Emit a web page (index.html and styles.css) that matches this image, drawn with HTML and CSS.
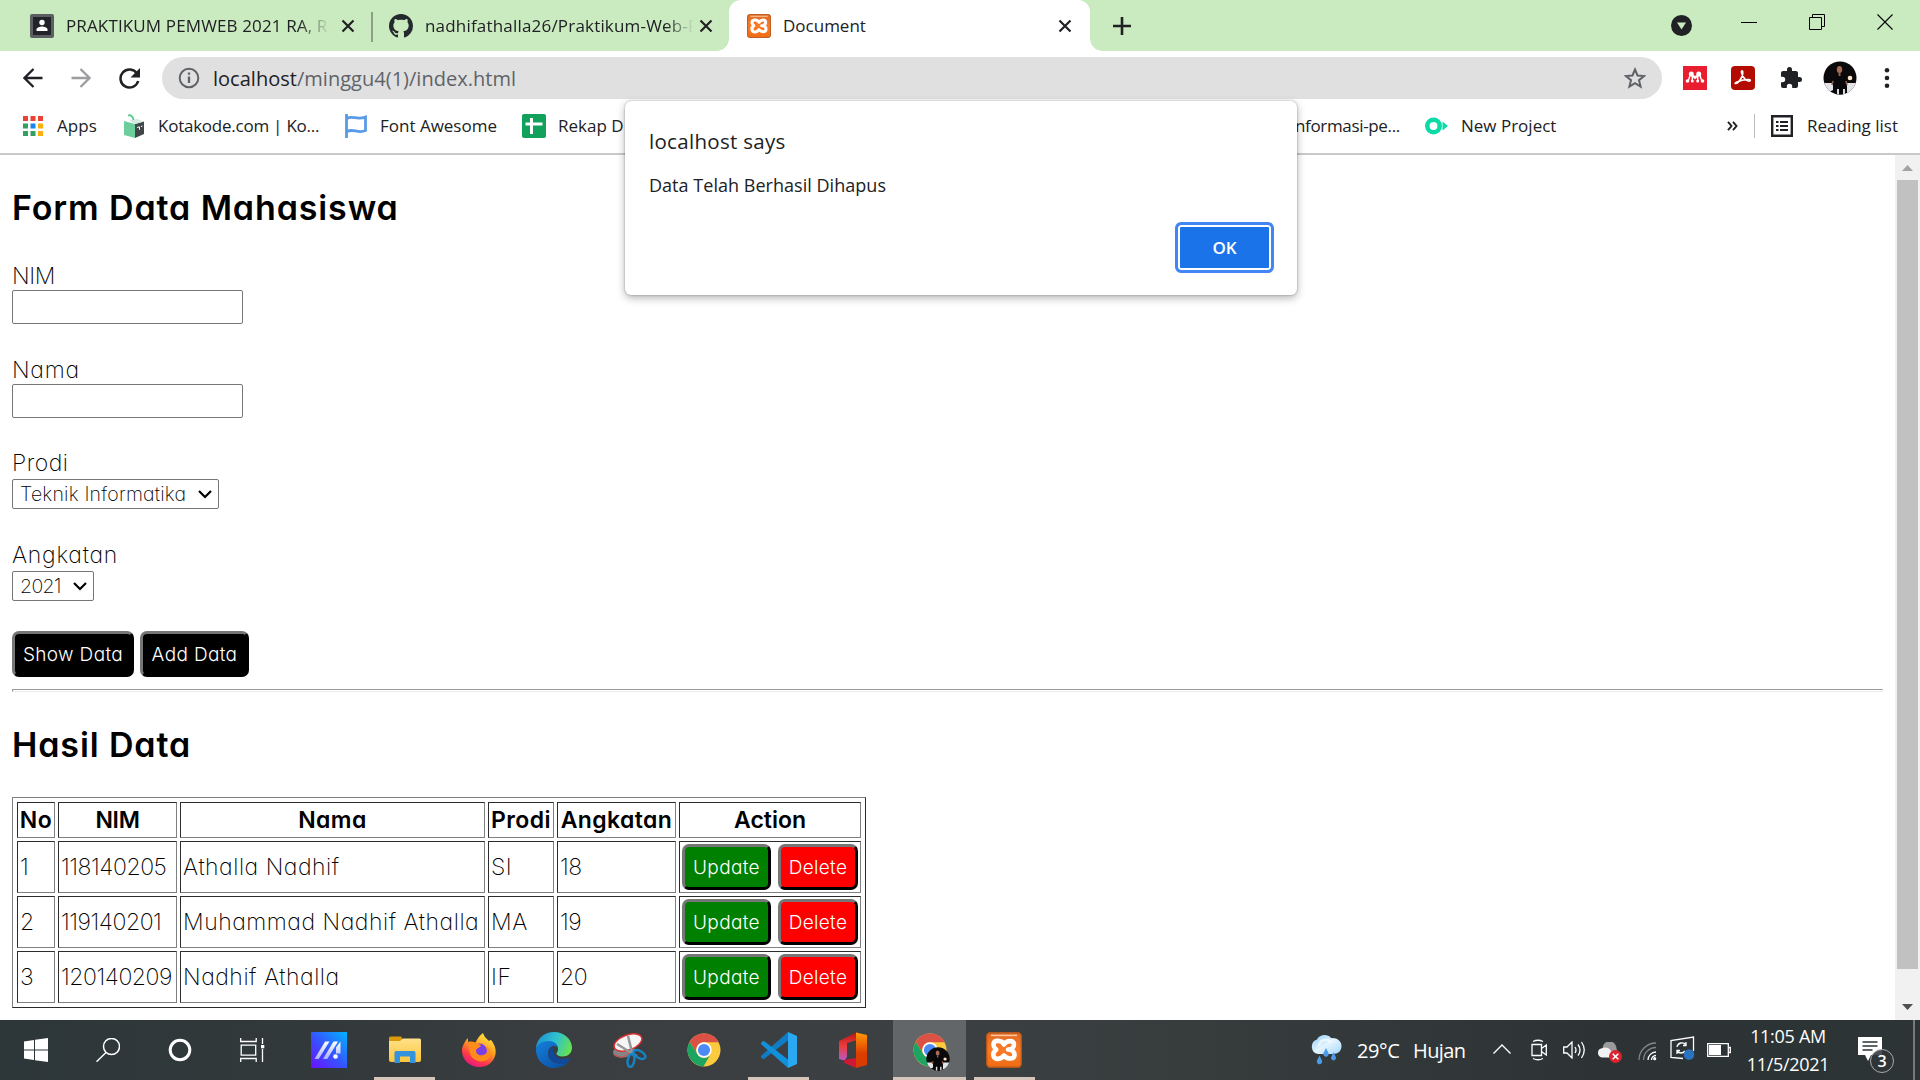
FILE: index.html
```html
<!DOCTYPE html>
<html lang="id">
<head>
<meta charset="utf-8">
<title>Document</title>
<link rel="stylesheet" href="styles.css">
</head>
<body>
<svg class="defs" width="0" height="0">
  <defs>
    <linearGradient id="ma" x1="0" y1="1" x2="1" y2="0"><stop offset="0" stop-color="#6a10ff"/><stop offset=".5" stop-color="#3457ff"/><stop offset="1" stop-color="#00b4ff"/></linearGradient>
    <linearGradient id="stripe" x1="0" y1="1" x2="0" y2="0"><stop offset="0" stop-color="#a9b4ff"/><stop offset="1" stop-color="#fff"/></linearGradient>
    <linearGradient id="folder" x1="0" y1="0" x2="0" y2="1"><stop offset="0" stop-color="#ffe08a"/><stop offset="1" stop-color="#fcc63a"/></linearGradient>
    <linearGradient id="fox" x1=".8" y1="0" x2=".3" y2="1"><stop offset="0" stop-color="#fff04a"/><stop offset=".45" stop-color="#ff9a1e"/><stop offset=".75" stop-color="#ff3b47"/><stop offset="1" stop-color="#e31587"/></linearGradient>
    <linearGradient id="edgeTop" x1="0" y1=".3" x2="1" y2=".6"><stop offset="0" stop-color="#1c92d2"/><stop offset=".5" stop-color="#2fc1cf"/><stop offset="1" stop-color="#66e24f"/></linearGradient>
    <linearGradient id="edgeLow" x1="0" y1="0" x2="1" y2="1"><stop offset="0" stop-color="#1480dd"/><stop offset="1" stop-color="#0a4a9c"/></linearGradient>
    <linearGradient id="offL" x1="0" y1="0" x2="0" y2="1"><stop offset="0" stop-color="#b41818"/><stop offset=".5" stop-color="#ee3a3c"/><stop offset="1" stop-color="#b45ac8"/></linearGradient>
    <linearGradient id="offR" x1="0" y1="0" x2="0" y2="1"><stop offset="0" stop-color="#ff9a0a"/><stop offset=".6" stop-color="#dd3d00"/><stop offset="1" stop-color="#d83a00"/></linearGradient>
    <linearGradient id="cloud" x1="0" y1="0" x2="1" y2="1"><stop offset="0" stop-color="#8ccdf8"/><stop offset=".5" stop-color="#e3f4ff"/><stop offset="1" stop-color="#a6d8fa"/></linearGradient>
    <linearGradient id="xa" x1="0" y1="0" x2="0" y2="1"><stop offset="0" stop-color="#dd6a25"/><stop offset=".5" stop-color="#fb7a24"/><stop offset="1" stop-color="#ef6c14"/></linearGradient>
    <clipPath id="round"><circle cx="17" cy="17" r="16.5"/></clipPath>
    <symbol id="x" viewBox="0 0 14 14"><path d="M1.5 1.5l11 11m0-11l-11 11" stroke="#202124" stroke-width="2.2"/></symbol>
    <symbol id="xampp" viewBox="0 0 36 36"><rect x=".7" y=".7" width="34.6" height="34.6" rx="3.5" fill="url(#xa)" stroke="#b5561c" stroke-width="1.4"/><path d="M5 3.400h26" stroke="#ffc49a" stroke-width="1.600"/><path d="M18 12.500C16 8 8 7.500 7.500 12.300c-.2 2.700 1.500 3.700 2.700 5.400C8.200 19.200 6.800 21 7.500 24c1.500 4.300 7.500 3.500 10.500-.5 3 4 10 4 10.500 0 .4-3.800-2.500-5.800-6.500-6 3.500 0 6.200-1.700 6-5C27.700 8 21 8 18 12.500z" fill="none" stroke="#fff" stroke-width="4.600" stroke-linejoin="round"/></symbol>
    <symbol id="photo" viewBox="0 0 34 34"><g clip-path="url(#round)"><rect width="34" height="34" fill="#0b0909"/><path d="M0 22h10v7l-6 3H0zM24 22h10v7l-7 3h-3z" fill="#e3e4ea"/><path d="M11 14q6-4 11 0l2 8-2 12H12l-2-12z" fill="#08080b"/><ellipse cx="16.500" cy="8.500" rx="2.700" ry="3.600" fill="#a76d57"/><path d="M15.500 12h2v3h-2z" fill="#996052"/><circle cx="27" cy="17" r="2.300" fill="#ffe7cb"/><path d="M14 28h2v6h-2zM20 28h2v6h-2z" fill="#ddd"/><path d="M10 20l-1 4m14-4l1 4" stroke="#8a5c4d" stroke-width="1.600"/></g></symbol>
    <symbol id="chrome" viewBox="0 0 34 34"><circle cx="17" cy="17" r="16.500" fill="#fccb3d"/><path d="M2.700 8.800A16.500 16.500 0 0 1 31.600 9.300H17A7.700 7.700 0 0 0 10.300 20.900z" fill="#dc5146"/><path d="M2.700 8.800L10.300 20.900A7.700 7.700 0 0 0 23.700 20.900L16.500 33.500A16.500 16.500 0 0 1 2.700 8.800z" fill="#1da362"/><circle cx="17" cy="17" r="7.700" fill="#fff"/><circle cx="17" cy="17" r="6.100" fill="#4c8bf5"/></symbol>
  </defs>
</svg>

<div class="screen">
  <header class="tabs">
    <div class="tab tab-one">
      <svg width="24" height="24" viewBox="0 0 24 24"><rect width="24" height="24" rx="2" fill="#5b5e63"/><rect x="3" y="3" width="18" height="18" fill="#202327"/><circle cx="12" cy="8.500" r="2.700" fill="#fff"/><path d="M6.500 17v-1.500c0-2 3.500-3 5.500-3s5.500 1 5.500 3V17z" fill="#fff"/></svg>
      <span class="tab-title title-one">PRAKTIKUM PEMWEB 2021 RA, R</span>
      <svg class="close" width="14" height="14"><use href="#x"/></svg>
    </div>
    <div class="tab tab-two">
      <svg width="24" height="24" viewBox="0 0 16 16"><path fill="#24292e" d="M8 0C3.580 0 0 3.580 0 8c0 3.540 2.290 6.530 5.470 7.590.4.070.55-.17.55-.38 0-.19-.01-.82-.01-1.490-2.010.37-2.530-.49-2.690-.94-.09-.23-.48-.94-.82-1.130-.28-.15-.68-.52-.01-.53.63-.01 1.080.58 1.230.82.72 1.210 1.870.87 2.330.66.070-.52.28-.87.51-1.070-1.780-.2-3.640-.89-3.640-3.950 0-.87.31-1.590.82-2.150-.08-.2-.36-1.020.08-2.120 0 0 .67-.21 2.200.82.64-.18 1.320-.27 2-.27s1.360.09 2 .27c1.530-1.040 2.200-.82 2.200-.82.44 1.100.16 1.920.08 2.120.51.56.82 1.270.82 2.150 0 3.070-1.870 3.750-3.650 3.950.29.25.54.73.54 1.480 0 1.070-.01 1.930-.01 2.200 0 .21.15.46.55.38A8.010 8.010 0 0 0 16 8c0-4.420-3.580-8-8-8z"/></svg>
      <span class="tab-title title-two">nadhifathalla26/Praktikum-Web-P</span>
      <svg class="close" width="14" height="14"><use href="#x"/></svg>
    </div>
    <div class="tab tab-active">
      <svg width="24" height="24"><use href="#xampp"/></svg>
      <span class="tab-title">Document</span>
      <svg class="close" width="14" height="14"><use href="#x"/></svg>
    </div>
    <svg class="plus" width="18" height="18" viewBox="0 0 18 18"><path d="M9 0v18M0 9h18" stroke="#202124" stroke-width="2.600"/></svg>
    <div class="window-tools">
      <svg width="21" height="21" viewBox="0 0 21 21"><circle cx="10.500" cy="10.500" r="10.500" fill="#202124"/><path d="M6 7.500h9l-4.500 7z" fill="#caeac0"/></svg>
      <svg class="win" width="16" height="16"><path d="M0 8.500h16" stroke="#000"/></svg>
      <svg class="win" width="16" height="16" fill="none" stroke="#000"><path d="M.5 3.500h12v12H.5zM3.500 3V.5h12v12H13"/></svg>
      <svg class="win" width="16" height="16" stroke="#000" stroke-width="1.100"><path d="M.5.500l15 15m0-15l-15 15"/></svg>
    </div>
  </header>

  <div class="toolbar">
    <svg width="20" height="20" viewBox="0 0 20 20" fill="none" stroke="#202124" stroke-width="2.300"><path d="M19.500 10H2M10.500 1L1.500 10l9 9"/></svg>
    <svg class="forward" width="20" height="20" viewBox="0 0 20 20" fill="none" stroke="#9b9da0" stroke-width="2.300"><path d="M.5 10H18M9.500 1l9 9-9 9"/></svg>
    <svg class="reload" width="21" height="21" viewBox="0 0 21 21"><path d="M18 5.500A9 9 0 1 0 19.200 13" fill="none" stroke="#202124" stroke-width="2.500"/><path d="M21 0v9.500h-9.500z" fill="#202124"/></svg>
    <div class="omnibox">
      <svg width="22" height="22" viewBox="0 0 22 22"><circle cx="11" cy="11" r="9.300" fill="none" stroke="#5f6368" stroke-width="2"/><path d="M11 9.500v6.500M11 5.500v2.300" stroke="#5f6368" stroke-width="2.300"/></svg>
      <span class="url"><b>localhost</b>/minggu4(1)/index.html</span>
      <svg class="star" width="22" height="22" viewBox="0 0 22 22"><path d="M11 2.500l2.500 6 6.500.5-5 4.200 1.600 6.400L11 16.200l-5.600 3.400L7 13.200 2 9l6.500-.5z" fill="none" stroke="#5f6368" stroke-width="2"/></svg>
    </div>
    <svg class="ext-one" width="24" height="24" viewBox="0 0 24 24"><path fill="#ea1d2f" d="M0 0h24v24H0z"/><path d="M4.500 15c2-1 1.500-5 3.500-7M8 8l4 3.500L16 8M9.300 9v6M14.700 9v6M16 8c2 2 1.500 6 3.500 7" fill="none" stroke="#fff" stroke-width="1.400"/><g fill="#fff"><circle cx="8.300" cy="8" r="2.500"/><circle cx="15.700" cy="8" r="2.500"/><circle cx="12" cy="11.300" r="1.700"/><circle cx="4.500" cy="15" r="1.800"/><circle cx="9.300" cy="15" r="1.500"/><circle cx="14.700" cy="15" r="1.500"/><circle cx="19.500" cy="15" r="1.800"/></g></svg>
    <svg class="ext" width="24" height="24" viewBox="0 0 24 24"><rect width="24" height="24" rx="4" fill="#b30b00"/><path d="M4.500 17.500C8 17 12.500 10 11.700 5.500 11.400 4.200 10 4.700 10.500 6.500c1 4.500 4.500 8.500 7.500 8.700 1.800 0 1.700-1.600 0-1.700-4-.3-8.500.8-12.500 2.700-1.500.8-1.800 1.500-1 1.300z" fill="none" stroke="#fff" stroke-width="1.600"/></svg>
    <svg class="puzzle" width="24" height="24" viewBox="0 0 24 24"><path fill="#202124" d="M20.500 11H19V7c0-1.100-.9-2-2-2h-4V3.500a2.500 2.500 0 0 0-5 0V5H4c-1.100 0-2 .9-2 2v3.800h1.500a2.700 2.700 0 0 1 0 5.400H2V20c0 1.100.9 2 2 2h3.800v-1.500a2.700 2.700 0 0 1 5.400 0V22H17c1.100 0 2-.9 2-2v-4h1.500a2.500 2.500 0 0 0 0-5z"/></svg>
    <svg class="avatar" width="34" height="34"><use href="#photo"/></svg>
    <svg class="dots" width="6" height="22" fill="#202124"><circle cx="3" cy="3.300" r="2.300"/><circle cx="3" cy="11" r="2.300"/><circle cx="3" cy="18.700" r="2.300"/></svg>
  </div>

  <div class="bookmarks">
    <div class="mark apps">
      <svg width="20" height="20" viewBox="0 0 20 20"><path fill="#ea4335" d="M0 0h5v5H0zM7.500 0h5v5h-5zM15 0h5v5h-5z"/><path fill="#34a060" d="M0 7.500h5v5H0zM0 15h5v5H0zM7.500 15h5v5h-5z"/><path fill="#1a85f0" d="M7.500 7.500h5v5h-5z"/><path fill="#fbaf0a" d="M15 7.500h5v5h-5zM15 15h5v5h-5z"/></svg>
      <span>Apps</span>
    </div>
    <div class="mark kota">
      <svg width="21" height="24" viewBox="0 0 21 24"><path fill="#6ccf9b" d="M0 7l11 3v14L0 21z"/><path fill="#41464a" d="M11 10l9-2.500V20l-9 4z"/><path d="M5 6.500L13 5l7 2.500-9 2.500z" fill="#d6eadf"/><path d="M13 13.500l2.500-.7v3M17 12.500l1.500-.5" stroke="#fff" fill="none"/><path d="M4 1.500c3-1 5 1 5.500 4.500" stroke="#55c98c" stroke-width="1.800" fill="none"/></svg>
      <span>Kotakode.com | Ko...</span>
    </div>
    <div class="mark fa">
      <svg width="22" height="24" viewBox="0 0 22 24" fill="none" stroke="#5a9be6" stroke-width="2.800"><path d="M1.500 0v24M2 4.500c5-3.500 10 2 18.500-1.500V16.500C13 20 8 14 2 17.500"/></svg>
      <span>Font Awesome</span>
    </div>
    <div class="mark rekap">
      <svg width="24" height="24" viewBox="0 0 24 24"><rect width="24" height="24" rx="2" fill="#12a15a"/><path d="M9.500 4v16M3.500 10h17" stroke="#fff" stroke-width="3"/></svg>
      <span>Rekap D</span>
    </div>
    <div class="mark info"><span>nformasi-pe...</span></div>
    <div class="mark project">
      <svg width="24" height="18" viewBox="0 0 24 18"><circle cx="8.500" cy="9" r="6.200" fill="none" stroke="#0bdca7" stroke-width="4.600"/><path d="M17.500 4.500v9L23 9z" fill="#0bdca7"/></svg>
      <span>New Project</span>
    </div>
    <svg class="more" width="11" height="10" viewBox="0 0 11 10" fill="none" stroke="#202124" stroke-width="1.900"><path d="M1 .8L4.500 5 1 9.200M6 .8L9.500 5 6 9.200"/></svg>
    <div class="mark reading">
      <svg width="22" height="22" viewBox="0 0 22 22"><path d="M1.200 1.200h19.600v19.600H1.200z" fill="none" stroke="#202124" stroke-width="2.400"/><path d="M5 7h2.500M9 7h8M5 11h2.500M9 11h8M5 15h2.500M9 15h8" stroke="#202124" stroke-width="2"/></svg>
      <span>Reading list</span>
    </div>
  </div>

  <div class="view">
    <main class="page">
      <h2>Form Data Mahasiswa</h2>
      <label class="field">
        <span class="nim">NIM</span>
        <input type="text">
      </label>
      <label class="field">
        <span>Nama</span>
        <input type="text">
      </label>
      <div class="field field-select">
        <span class="prodi">Prodi</span>
        <div class="select select-prodi">Teknik Informatika<svg width="14" height="9" viewBox="0 0 14 9"><path d="M1 1l6 6 6-6" fill="none" stroke="#000" stroke-width="2.200"/></svg></div>
      </div>
      <div class="field field-select">
        <span>Angkatan</span>
        <div class="select select-year"><span class="year">2021</span><svg width="14" height="9" viewBox="0 0 14 9"><path d="M1 1l6 6 6-6" fill="none" stroke="#000" stroke-width="2.200"/></svg></div>
      </div>
      <div class="actions">
        <button class="btn show">Show Data</button>
        <button class="btn add">Add Data</button>
      </div>
      <hr>
      <h2 class="result">Hasil Data</h2>
      <table>
        <colgroup><col class="c-no"><col class="c-nim"><col class="c-nama"><col class="c-prodi"><col class="c-angkatan"><col class="c-action"></colgroup>
        <tr><th>No</th><th class="nim">NIM</th><th>Nama</th><th>Prodi</th><th>Angkatan</th><th class="act">Action</th></tr>
        <tr><td>1</td><td class="num">118140205</td><td>Athalla Nadhif</td><td>SI</td><td class="num">18</td><td class="cell"><div class="pair"><button class="btn update">Update</button><button class="btn delete">Delete</button></div></td></tr>
        <tr><td>2</td><td class="num">119140201</td><td>Muhammad Nadhif Athalla</td><td>MA</td><td class="num">19</td><td class="cell"><div class="pair"><button class="btn update">Update</button><button class="btn delete">Delete</button></div></td></tr>
        <tr><td>3</td><td class="num">120140209</td><td>Nadhif Athalla</td><td>IF</td><td class="num">20</td><td class="cell"><div class="pair"><button class="btn update">Update</button><button class="btn delete">Delete</button></div></td></tr>
      </table>
    </main>
    <div class="scrollbar">
      <svg width="11" height="6"><path d="M0 6L5.500 0 11 6z" fill="#a3a3a3"/></svg>
      <div class="thumb"></div>
      <svg width="11" height="6"><path d="M0 0h11L5.500 6z" fill="#505050"/></svg>
    </div>
  </div>

  <footer class="taskbar">
    <div class="task start"><svg width="24" height="24" viewBox="0 0 24 24" fill="#fff"><path d="M0 3.400l10-1.500v9.600H0zM11 1.700L24 0v11.500H11zM0 12.500h10v9.600L0 20.600zM11 12.500h13V24l-13-1.700z"/></svg></div>
    <div class="task"><svg width="24" height="24" viewBox="0 0 24 24" fill="none" stroke="#fff" stroke-width="1.500"><circle cx="15.500" cy="8.500" r="8"/><path d="M10 14.500L.5 23.700"/></svg></div>
    <div class="task"><svg width="24" height="24" viewBox="0 0 24 24"><circle cx="12" cy="12" r="9.800" fill="none" stroke="#fff" stroke-width="3"/></svg></div>
    <div class="task"><svg width="25" height="24" viewBox="0 0 25 24" fill="none" stroke="#fff" stroke-width="1.300"><path d="M.7 0v3.500h15.500V0M1.200 7.200h14.500v10H1.200zM.7 24v-3.500h15.500V24M22.500 0v6M22.500 11v13"/><path d="M21 7h3.300v3.300H21z" fill="#fff" stroke="none"/></svg></div>
    <div class="task"><svg width="36" height="36" viewBox="0 0 36 36"><path fill="url(#ma)" d="M0 0h36v36H0z"/><path d="M3.500 27h4.200L18.500 9.500h-4.400zM12 27h4.300L27 9.500h-4.500zM25 15.500l4.500-6v12H25z" fill="url(#stripe)"/><circle cx="24.500" cy="24.500" r="2.300" fill="#fff"/></svg></div>
    <div class="task open explorer"><svg width="36" height="36" viewBox="0 0 36 36"><path d="M2 6q0-1.500 1.500-1.500H14l2 3h16q2 0 2 2V12H2z" fill="#dc9a08"/><path d="M2 9h11l3-2.500h16.500q1.500 0 1.500 1.500v20q0 2-2 2H4q-2 0-2-2z" fill="url(#folder)"/><path d="M7.500 31V20.500q0-1.500 1.500-1.500h18q1.500 0 1.500 1.500V31H23v-6.500H13V31z" fill="#3592dc"/></svg></div>
    <div class="task"><svg width="36" height="36" viewBox="0 0 36 36"><path d="M22 1c1 4 4 6 6 8 1-1 1.500-1 2-1 5 6 6 13 3 18.500C29.500 33 24 35 18 35 9 35 1 28 1 19c0-5 2.500-8 4-11l2-2v4l5 1 2 1c2-5 4-8 8-11z" fill="url(#fox)"/><circle cx="18.500" cy="19" r="7.500" fill="#7a3ee6"/><path d="M7 10c4-1 8 0 10 2l3 1c-1 3-4 3-5 5 0 4 3 6 7 5 5-1 5-5 3-9 5 3 6 9 2 13-5 4-13 3-17-3-2-5-2-9-3-14z" fill="#ff8b1c"/></svg></div>
    <div class="task"><svg width="36" height="36" viewBox="0 0 36 36"><path d="M0 17C0 7 8 0 18 0s18 7.500 18 15.500c0 6-4.500 9-9.500 9-4 0-6-1.500-6-2.700 0-1.300 1.500-1.800 1.500-5C22 12.500 18 10 12 10 6 10 1.500 13 0 17z" fill="url(#edgeTop)"/><path d="M0 17c1.500-4.500 6-8 12.500-8 5.500 0 9 3 9.500 7-3-4-10-2-10 5.500 0 6 5 10 11.500 10 4.500 0 7.500-1.500 10.500-3.500C30 33 25 36 18 36 8 36-.5 27.500 0 17z" fill="url(#edgeLow)"/><path d="M12 22c1-4 3-6 6-7-2 5 1 12 9 12 4 0 6-1 8-1-4 6-9 7-13 5.500-6-1.500-9-5-10-9.500z" fill="#11489a"/></svg></div>
    <div class="task"><svg width="36" height="36" viewBox="0 0 36 36"><ellipse cx="13" cy="19" rx="11" ry="6.500" transform="rotate(-12 13 19)" fill="#858585"/><path d="M2 22q10 7 17-2" stroke="#d44" fill="none"/><ellipse cx="17" cy="10.500" rx="14.500" ry="7.500" transform="rotate(-20 17 10.500)" fill="#f5f5f5" stroke="#dc3032" stroke-width="1.500"/><path d="M17 4l4 16 2 3M6 12l16 10 4 2" stroke="#94979a" stroke-width="2.500" fill="none"/><g fill="none" stroke="#1683c7" stroke-width="2.400"><ellipse cx="20" cy="28.500" rx="3.300" ry="6.500" transform="rotate(10 20 28.500)"/><ellipse cx="28.500" cy="22.500" rx="6.500" ry="3.500" transform="rotate(30 28.500 22.500)"/></g></svg></div>
    <div class="task"><svg width="34" height="34"><use href="#chrome"/></svg></div>
    <div class="task open vscode"><svg width="36" height="36" viewBox="0 0 36 36"><path d="M27 0L0 24c-.5 1 1.500 3.500 3 3L27 8.500z" fill="#0f7cc4"/><path d="M27 36L0 12c-.5-1 1.500-3.500 3-3l24 18.500z" fill="#1190dc"/><path d="M27 0l9 4v28l-9 4z" fill="#2aa9f2"/></svg></div>
    <div class="task office"><svg width="28" height="36" viewBox="0 0 28 36"><path d="M18 0L0 9v18l5.500 1.500L8 25V11l10-3z" fill="url(#offL)"/><path d="M17 .5L28 3v30l-11 3z" fill="url(#offR)"/><path d="M5 28l12-2v10L5.500 31z" fill="#cf1736"/></svg></div>
    <div class="task open current"><span class="stack"><svg width="34" height="34"><use href="#chrome"/></svg><svg class="badge" width="24" height="24"><use href="#photo"/></svg></span></div>
    <div class="task open xampp"><svg width="36" height="36"><use href="#xampp"/></svg></div>

    <div class="tray">
      <svg width="32" height="32" viewBox="0 0 32 32"><path d="M8 20a7.500 7.500 0 0 1-1-14.500C9 1 17-1 21 4c6-.5 10.500 3 10.500 8S28 20 23 20z" fill="url(#cloud)"/><path d="M9 12c0-6 9-9 12-3" stroke="#fff" stroke-width="2.500" opacity=".6" fill="none"/><g fill="#4a9bea"><path d="M16 14l2.500 5a2.700 2.700 0 1 1-5 0zM23.500 18l2.300 5a2.500 2.500 0 1 1-4.600 0zM9.500 21.500l2.500 5a2.700 2.700 0 1 1-5 0z"/></g></svg>
      <span class="temp">29°C</span>
      <span class="weather">Hujan</span>
      <svg class="caret" width="18" height="10" fill="none" stroke="#fff" stroke-width="1.400"><path d="M.5 9.500L9 1l8.500 8.500"/></svg>
      <svg class="cam" width="16" height="22" viewBox="0 0 16 22" fill="none" stroke="#fff" stroke-width="1.300"><path d="M1 5.500h9.500v11H1zM10.500 9.500L15.300 6v10l-4.800-3.500M2 2.500Q7 0 12 2.500M2 19.500q5 2.500 10 0"/></svg>
      <svg class="vol" width="22" height="18" viewBox="0 0 22 18" fill="none" stroke="#fff" stroke-width="1.300"><path d="M.7 6H4l5-5v16l-5-5H.7zM12 6q2 3 0 6M15 3.500q4 5.500 0 11M18.500 1q5.500 8 0 16"/></svg>
      <svg class="drive" width="24" height="21" viewBox="0 0 24 21"><path d="M5 8A6.500 6.500 0 0 1 18 4l2 9H10z" fill="#9a9a9a"/><path d="M4 15.500a4.700 4.700 0 0 1 0-9.300c4-2 8 0 9 3l4 3-4 3.300z" fill="#f2f2f2"/><circle cx="17.500" cy="14.500" r="6.500" fill="#d9232e"/><path d="M14.700 11.700l5.600 5.600m0-5.600l-5.600 5.600" stroke="#fff" stroke-width="1.600"/></svg>
      <svg class="wifi" width="19" height="19" viewBox="0 0 19 19" fill="none"><g stroke="#82878a" stroke-width="1.300"><path d="M1 18A17 17 0 0 1 18 1M5.500 18A12.500 12.500 0 0 1 18 5.500"/></g><path d="M10 18a8 8 0 0 1 8-8M13.500 18a4.500 4.500 0 0 1 4.500-4.500" stroke="#fff" stroke-width="1.300"/><circle cx="16.700" cy="16.700" r="1.600" fill="#fff"/></svg>
      <svg class="sync" width="25" height="24" viewBox="0 0 25 24" fill="none" stroke="#fff" stroke-width="1.300"><path d="M23.500 15V1L1 4.500v16.800l12 1.200M7 11a5 5 0 0 1 9-2m0-3v3.500h-3M15 15a5 5 0 0 1-8 0m0 3v-3.500h3"/><circle cx="19" cy="18.500" r="5.300" fill="#2b72c0" stroke="none"/></svg>
      <svg class="battery" width="24" height="14" viewBox="0 0 24 14"><path d="M.7.700h20.600v12.600H.7zM22 4.500h1.300v5H22" fill="none" stroke="#fff" stroke-width="1.300"/><path d="M2 2h12v10H2z" fill="#fff"/></svg>
      <div class="clock"><span>11:05 AM</span><span>11/5/2021</span></div>
      <div class="notice">
        <svg width="24" height="24" viewBox="0 0 24 24"><path d="M0 0h24v18H13l-3 6-3-6H0z" fill="#fff"/><path d="M4.500 5h15M4.500 9h15M4.500 13h10" stroke="#2d3335" stroke-width="1.400"/></svg>
        <span class="count">3</span>
      </div>
      <i class="peek"></i>
    </div>
  </footer>

  <div class="dialog">
    <p class="origin">localhost says</p>
    <p class="message">Data Telah Berhasil Dihapus</p>
    <button class="ok">OK</button>
  </div>
</div>
</body>
</html>
```
FILE: styles.css
```css
* { box-sizing: border-box; }
html, body { margin: 0; height: 100%; overflow: hidden; }
body { font-family: "Open Sans", "Noto Sans", sans-serif; color: #202124; }
svg { display: block; flex: none; }
.defs { position: absolute; }
.screen { position: relative; width: 1920px; height: 1080px; display: flex; flex-direction: column; background: #fff; }

/* tab strip */
.tabs { height: 51px; flex: none; display: flex; align-items: center; background: #caeac0; font-size: 17px; }
.tab { height: 51px; display: flex; align-items: center; white-space: nowrap; }
.tab-one { width: 373px; padding-left: 30px; background: linear-gradient(#8ba084, #8ba084) right 0 top 12px / 2px 30px no-repeat; }
.tab-two { width: 356px; padding-left: 16px; }
.tab-active { width: 361px; padding-left: 18px; background: #fff; border-radius: 12px 12px 0 0; position: relative; }
.tab-active::before, .tab-active::after { content: ""; position: absolute; bottom: 0; width: 12px; height: 12px; }
.tab-active::before { left: -12px; background: radial-gradient(circle at 0 0, transparent 11.500px, #fff 12px); }
.tab-active::after { right: -12px; background: radial-gradient(circle at 100% 0, transparent 11.500px, #fff 12px); }
.tab-title { margin: 0 0 1px 12px; }
.title-one { width: 264px; letter-spacing: .13px; -webkit-mask-image: linear-gradient(90deg, #000 88%, transparent); mask-image: linear-gradient(90deg, #000 88%, transparent); }
.title-two { width: 276px; letter-spacing: .19px; -webkit-mask-image: linear-gradient(90deg, #000 88%, transparent 98%); mask-image: linear-gradient(90deg, #000 88%, transparent 98%); }
.close { margin-left: auto; }
.tab-one .close { margin-right: 18px; }
.tab-two .close { margin-right: 16px; }
.tab-active .close { margin-right: 18px; }
.plus { margin-left: 23px; }
.window-tools { margin-left: auto; margin-right: 27px; display: flex; align-items: center; }
.window-tools .win { margin: -8px 0 0 52px; }
.window-tools .win:nth-child(2) { margin-left: 49px; }

/* address bar */
.toolbar { height: 54px; flex: none; display: flex; align-items: center; padding-left: 23px; }
.forward { margin-left: 28px; }
.reload { margin-left: 28px; }
.omnibox { margin-left: 22px; width: 1500px; height: 42px; border-radius: 21px; background: #e0e0e0; display: flex; align-items: center; padding: 0 16px; }
.url { margin-left: 13px; font-size: 20px; letter-spacing: .02px; color: #5f6368; }
.url b { font-weight: 400; color: #202124; }
.star { margin-left: auto; }
.ext-one { margin-left: 21px; }
.ext { margin-left: 24px; }
.puzzle { margin-left: 24px; }
.avatar { margin-left: 20px; }
.dots { margin-left: 27px; }

/* bookmarks */
.bookmarks { height: 50px; flex: none; display: flex; align-items: center; padding: 0 0 7px 23px; border-bottom: 2px solid #c9c9c9; font-size: 17px; white-space: nowrap; }
.mark { display: flex; align-items: center; }
.mark span { margin-left: 14px; }
.apps { width: 101px; letter-spacing: .1px; }
.kota { width: 221px; }
.kota span { margin-left: 13px; letter-spacing: -.24px; }
.fa { width: 177px; }
.fa span { margin-left: 13px; }
.rekap { width: 773px; }
.rekap span { margin-left: 12px; }
.info { width: 130px; }
.info span { margin-left: 0; letter-spacing: -.34px; }
.project span { margin-left: 12px; }
.more { margin-left: auto; margin-right: 16px; }
.reading { height: 24px; border-left: 1px solid #bbb; padding: 0 22px 0 16px; }

/* page */
.view { flex: 1; min-height: 0; display: flex; }
.page { width: 1895px; padding: 30px 12px 0; overflow: hidden; font-family: Inter, "Open Sans", sans-serif; font-feature-settings: "cv11"; font-size: 23px; font-weight: 250; color: #000; }
h2 { margin: 0; height: 71px; line-height: 46px; font-size: 34px; font-weight: 600; letter-spacing: .88px; }
.field { display: block; height: 94px; padding-top: 4px; letter-spacing: .75px; }
.field > span { display: block; height: 30px; line-height: 32px; }
.field > .nim { letter-spacing: -.4px; }
.field > .prodi { letter-spacing: .5px; }
.field input { display: block; width: 231px; height: 34px; margin: 0; border: 1px solid #767676; border-radius: 2px; }
.field-select { height: 92px; padding-top: 4px; }
.select { height: 30px; display: flex; align-items: center; justify-content: space-between; padding: 0 6px 0 7px; border: 1px solid #767676; border-radius: 2px; font-size: 19.500px; letter-spacing: .2px; }
.field-select > span { height: 31px; line-height: 31px; }
.select-prodi { width: 207px; }
.select-year { width: 82px; }
.year { letter-spacing: -.6px; }
.actions { display: flex; gap: 6px; padding-top: 3px; }
.btn { height: 46px; padding: 0; border: 3px outset #767676; border-color: #767676 #212121 #212121 #767676; border-radius: 7px; background: #000; color: #fff; font: 350 19px Inter, sans-serif; font-feature-settings: "cv11"; letter-spacing: .35px; }
.show { width: 122px; }
.add { width: 109px; }
hr { margin: 12px 0 0; border: 1px solid; border-color: #999 #ececec #ececec #999; height: 3px; }
.result { margin-top: 30px; height: 75px; line-height: 45px; }
table { width: 854px; table-layout: fixed; border: 1px solid; border-color: #808080 #2c2c2c #2c2c2c #808080; border-spacing: 3px; padding: 1px; letter-spacing: .52px; }
.c-no { width: 38px; } .c-nim { width: 119px; } .c-nama { width: 305px; } .c-prodi { width: 66px; } .c-angkatan { width: 119px; } .c-action { width: 182px; }
th, td { border: 1px solid; border-color: #2c2c2c #808080 #808080 #2c2c2c; padding: 0 2px; white-space: nowrap; line-height: 28px; }
th { height: 36px; font-weight: 600; padding: 0; text-align: center; letter-spacing: .4px; }
th.nim { letter-spacing: -.3px; }
th.act { letter-spacing: 0; }
td { height: 52px; text-align: left; }
.num { letter-spacing: -.45px; }
.pair { display: flex; gap: 7px; }
.update { width: 89px; background: green; }
.delete { width: 80px; background: red; letter-spacing: .3px; }

.scrollbar { width: 25px; background: #f1f1f1; display: flex; flex-direction: column; align-items: center; padding: 10px 0; }
.scrollbar .thumb { width: 21px; height: 790px; margin: 9px 0 35px; background: #c1c1c1; }

/* taskbar */
.taskbar { height: 60px; flex: none; display: flex; background: linear-gradient(90deg, #2d3638 0, #30383a 12%, #3b3e40 32%, #3c4042 45%, #373c3d 62%, #2d3335 84%, #2c3436 100%); color: #fff; }
.task { width: 72px; height: 60px; flex: none; display: flex; align-items: center; justify-content: center; }
.task:nth-child(5) { width: 82px; }
.task:nth-child(6) { width: 61px; margin-left: 4px; }
.task:nth-child(7) { width: 74px; margin-left: 7px; }
.task:nth-child(8) { width: 75px; }
.task:nth-child(9) { width: 75px; }
.task:nth-child(10) { width: 75px; }
.open { border-bottom: 3px solid #d5c5bb; padding-top: 3px; }
.vscode { width: 61px; margin-left: 7px; }
.office { width: 75px; margin-left: 6px; }
.current { width: 73px; margin-left: 3px; background: #636668; }
.task.xampp { width: 61px; margin-left: 8px; padding-right: 1px; }
.stack { position: relative; }
.badge { position: absolute; left: 13px; top: 14px; }
.tray { margin-left: auto; display: flex; align-items: center; height: 60px; }
.temp { width: 42px; margin-left: 15px; font-size: 20px; letter-spacing: -.4px; white-space: nowrap; }
.weather { width: 52px; margin-left: 14px; font-size: 20px; letter-spacing: -.6px; }
.caret { margin: -2px 0 0 28px; }
.cam { margin-left: 20px; }
.vol { margin-left: 16px; }
.drive { margin: 4px 0 0 13px; }
.wifi { margin: 2px 0 0 16px; }
.sync { margin: -5px 0 0 13px; }
.battery { margin-left: 12px; }
.clock { width: 92px; margin-left: 11px; display: flex; flex-direction: column; align-items: center; font-size: 18px; line-height: 28px; letter-spacing: -.3px; padding-bottom: 1px; }
.notice { position: relative; margin: -2px 0 0 24px; width: 36px; }
.count { position: absolute; left: 12px; top: 12px; width: 24px; height: 24px; border: 1px solid #a9acad; border-radius: 50%; background: rgba(48, 54, 56, .88); font-size: 16px; font-weight: 600; line-height: 22px; text-align: center; }
.peek { width: 7px; height: 60px; margin-left: 19px; border-left: 2px solid #767b7d; }

/* alert */
.dialog { position: absolute; left: 625px; top: 101px; width: 672px; height: 194px; padding: 25px 23px 22px 24px; background: #fff; border-radius: 6px; box-shadow: 0 0 2px rgba(0, 0, 0, .35), 0 3px 8px rgba(0, 0, 0, .3); display: flex; flex-direction: column; }
.dialog p { margin: 0; white-space: nowrap; }
.origin { font-size: 20.500px; line-height: 30px; letter-spacing: .3px; }
.message { font-size: 18px; line-height: 28px; padding-top: 15px; letter-spacing: .03px; }
.ok { width: 99px; height: 51px; margin-top: auto; align-self: flex-end; padding: 0; border: 3px solid #4285f4; border-radius: 6px; background: #1a73e8; box-shadow: inset 0 0 0 2px #fff; color: #fff; font: 600 17px "Open Sans", sans-serif; }
```
